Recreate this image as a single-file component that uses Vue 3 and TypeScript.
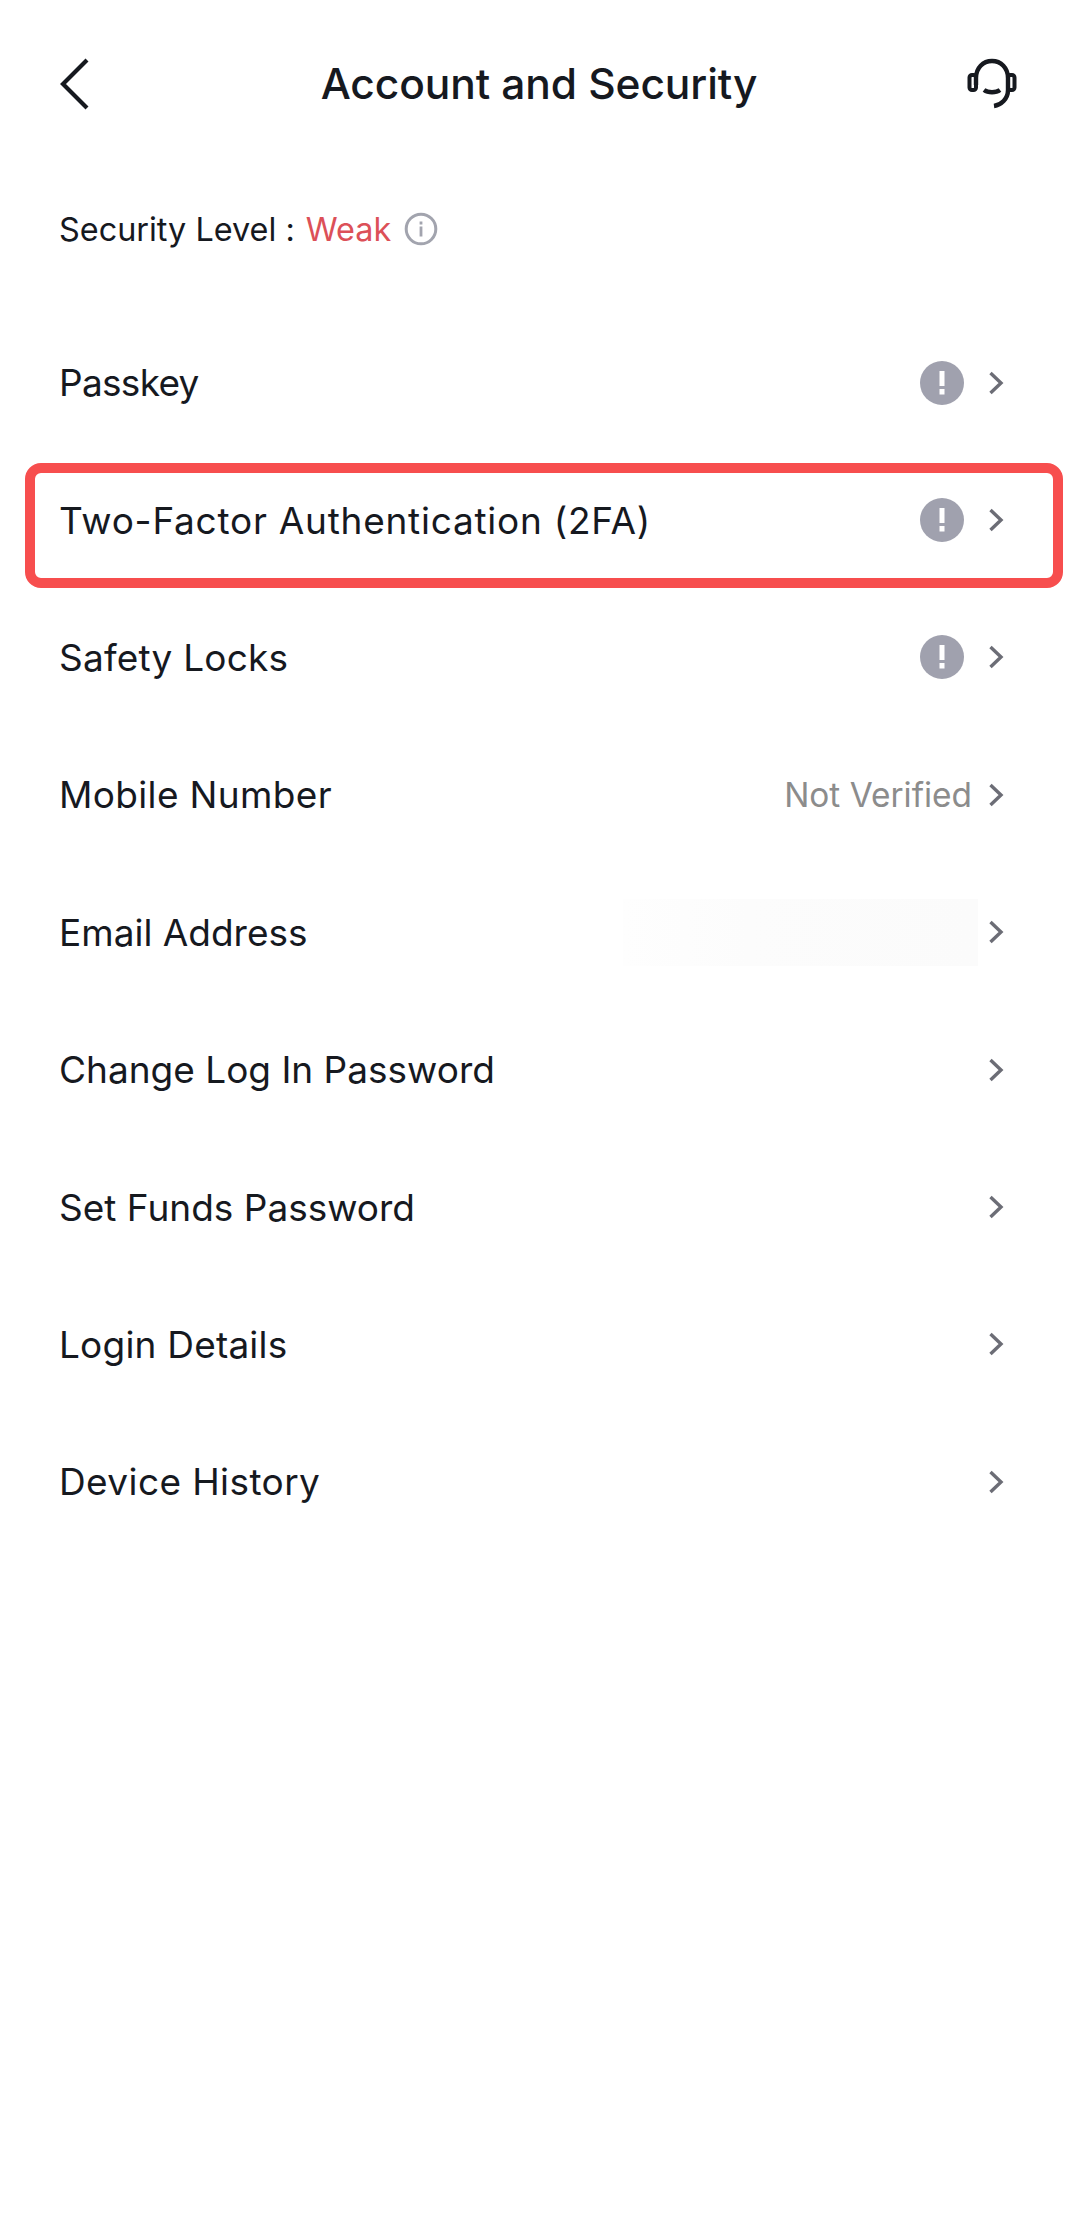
<script setup lang="ts">
interface Row {
  label: string
  track?: number
  warn?: boolean
  note?: string
  masked?: boolean
  marked?: boolean
}

const rows: Row[] = [
  { label: 'Passkey', track: -0.7, warn: true },
  { label: 'Two-Factor Authentication (2FA)', track: 0.75, warn: true, marked: true },
  { label: 'Safety Locks', track: 0.2, warn: true },
  { label: 'Mobile Number', track: 0.35, note: 'Not Verified' },
  { label: 'Email Address', masked: true },
  { label: 'Change Log In Password' },
  { label: 'Set Funds Password' },
  { label: 'Login Details', track: 0.2 },
  { label: 'Device History', track: 0.4 },
]
</script>

<template>
  <div class="page">
    <header class="topbar">
      <svg class="back" width="30" height="52" viewBox="0 0 30 52" fill="none">
        <path d="M27 2 L3 26 L27 50" stroke="#16191f" stroke-width="4.2" />
      </svg>
      <h1 class="title">Account and Security</h1>
      <svg class="support" width="52" height="52" viewBox="0 0 52 52" fill="none">
        <path d="M10 27 V20 C10 10 17 3 26 3 C35 3 42 10 42 20 V32 C42 41 35 47 28 48" stroke="#16191f" stroke-width="4.4" />
        <rect x="3.5" y="17" width="6.5" height="15" rx="2.5" stroke="#16191f" stroke-width="4" />
        <rect x="42" y="17" width="6.5" height="15" rx="2.5" stroke="#16191f" stroke-width="4" />
        <path d="M18 32 C22 35 30 35 34 32" stroke="#16191f" stroke-width="4.4" />
      </svg>
    </header>

    <div class="level">
      <span>Security Level :</span>
      <span class="weak">Weak</span>
      <svg width="34" height="34" viewBox="0 0 34 34" fill="none">
        <circle cx="17" cy="17" r="14.8" stroke="#a2a4ae" stroke-width="3" />
        <rect x="15.6" y="9.5" width="2.8" height="3" fill="#a2a4ae" />
        <rect x="15.6" y="14.5" width="2.8" height="10" fill="#a2a4ae" />
      </svg>
    </div>

    <ul class="list">
      <li v-for="row in rows" :key="row.label" class="row" :class="{ marked: row.marked }">
        <span class="label" :style="{ letterSpacing: `${row.track ?? 0}px` }">{{ row.label }}</span>
        <svg v-if="row.warn" class="badge" width="44" height="44" viewBox="0 0 44 44">
          <circle cx="22" cy="22" r="22" fill="#a0a1ae" />
          <rect x="19.5" y="10" width="5" height="15" fill="#fff" />
          <rect x="19.5" y="28" width="5" height="5.5" fill="#fff" />
        </svg>
        <span v-if="row.note" class="note">{{ row.note }}</span>
        <span v-if="row.masked" class="mask"></span>
        <svg class="chev" width="16" height="24" viewBox="0 0 16 24" fill="none">
          <path d="M2.5 2 L13 12 L2.5 22" stroke="#6c6d76" stroke-width="3.4" />
        </svg>
      </li>
    </ul>
  </div>
</template>

<style>
body {
  background: #fff;
}
</style>

<style scoped>
.page {
  height: 2227px;
  overflow: hidden;
  background: #fff;
  color: #16191f;
  font-family: Inter, 'Liberation Sans', sans-serif;
}

.topbar {
  display: grid;
  grid-template-columns: 1fr auto 1fr;
  align-items: center;
  height: 168px;
  padding: 0 60px;
  box-sizing: border-box;
}

.support {
  justify-self: end;
}

.title {
  margin: 0 0 2px;
  font-size: 42.5px;
  font-weight: 500;
  letter-spacing: -0.1px;
}

.level {
  display: flex;
  align-items: center;
  height: 122px;
  padding-left: 59px;
  font-size: 32.4px;
  box-sizing: border-box;
}

.weak {
  margin: 0 13px 0 11px;
  color: #dc5058;
}

.list {
  margin: 24px 0 0;
  padding: 0;
  list-style: none;
}

.row {
  position: relative;
  display: flex;
  align-items: center;
  height: 137.4px;
  padding: 0 74px 0 59px;
  box-sizing: border-box;
}

.row.marked::after {
  content: '';
  position: absolute;
  inset: 12px 15px 1px 25px;
  border: 10px solid #f74e4e;
  border-radius: 16px;
}

.label {
  margin-right: auto;
  font-size: 37px;
  font-weight: 400;
}

.badge {
  margin-right: 24px;
}

.note {
  margin-right: 16px;
  font-size: 33.4px;
  color: #8c8c8c;
}

.mask {
  width: 355px;
  height: 67px;
  margin-right: 10px;
  background: linear-gradient(90deg, #fefefe, #fcfcfc 35%, #fbfbfb);
}

.chev {
  flex: none;
}
</style>
